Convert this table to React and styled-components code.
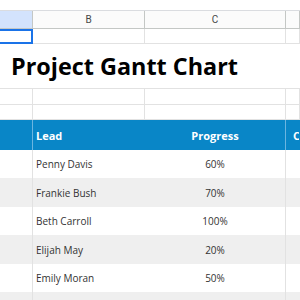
import React from 'react';
import styled, { createGlobalStyle, css } from 'styled-components';

const GlobalStyle = createGlobalStyle`
  html, body {
    margin: 0;
    padding: 0;
    background: #ffffff;
    overflow: hidden;
  }
  * {
    box-sizing: border-box;
  }
`;

const COLS = '33px 112px 141px 1fr';
const GRID = '#e2e2e2';

const rows = [
  { lead: 'Penny Davis', progress: '60%' },
  { lead: 'Frankie Bush', progress: '70%' },
  { lead: 'Beth Carroll', progress: '100%' },
  { lead: 'Elijah May', progress: '20%' },
  { lead: 'Emily Moran', progress: '50%' },
  { lead: '', progress: '' },
];

function App() {
  return (
    <>
      <GlobalStyle />
      <Sheet>
        <TopStrip />
        <ColumnHeader>
          <ColLetter selected />
          <ColLetter>B</ColLetter>
          <ColLetter>C</ColLetter>
          <ColLetter />
        </ColumnHeader>

        <Row height={15}>
          <Cell selected />
          <Cell />
          <Cell />
          <Cell />
        </Row>

        <TitleRow>
          <Title>Project Gantt Chart</Title>
        </TitleRow>

        <Row height={16}>
          <Cell />
          <Cell />
          <Cell />
          <Cell />
        </Row>
        <Row height={15}>
          <Cell />
          <Cell />
          <Cell />
          <Cell />
        </Row>

        <HeadRow>
          <HeadCell divider />
          <HeadCell>Lead</HeadCell>
          <HeadCell center divider>
            Progress
          </HeadCell>
          <HeadCell pad={7}>Cost</HeadCell>
        </HeadRow>

        {rows.map((r, i) => (
          <DataRow key={i} striped={i % 2 === 1} height={i % 2 === 0 ? 28 : 29}>
            <DataCell divider />
            <DataCell>{r.lead}</DataCell>
            <DataCell center divider>
              {r.progress}
            </DataCell>
            <DataCell />
          </DataRow>
        ))}
      </Sheet>
    </>
  );
}

const Sheet = styled.div`
  width: 300px;
  height: 300px;
  overflow: hidden;
  font-family: 'Open Sans', 'Liberation Sans', sans-serif;
`;

const TopStrip = styled.div`
  height: 11px;
  background: #ffffff;
  border-bottom: 1px solid #dadce0;
`;

const ColumnHeader = styled.div`
  display: grid;
  grid-template-columns: ${COLS};
  height: 18px;
  border-bottom: 1px solid #c4c7c5;
`;

const ColLetter = styled.div`
  display: flex;
  align-items: center;
  justify-content: center;
  font-family: Roboto, 'Liberation Sans', sans-serif;
  font-size: 10px;
  color: #444746;
  background: ${(p) => (p.selected ? '#d3e3fd' : '#fbfbfb')};
  border-right: 1px solid #c4c7c5;
`;

const Row = styled.div`
  display: grid;
  grid-template-columns: ${COLS};
  height: ${(p) => p.height}px;
`;

const Cell = styled.div`
  border-right: 1px solid ${GRID};
  border-bottom: 1px solid ${GRID};
  ${(p) =>
    p.selected &&
    css`
      border: none;
      box-shadow: inset 0 2px #1a73e8, inset -2px 0 #1a73e8, inset 0 -2px #1a73e8;
    `}
`;

const TitleRow = styled.div`
  height: 45px;
  display: flex;
  align-items: center;
  padding-left: 11px;
  border-bottom: 1px solid ${GRID};
`;

const Title = styled.h1`
  margin: 0;
  font-family: 'Open Sans', sans-serif;
  font-weight: 700;
  font-size: 23.4px;
  color: #000000;
  white-space: nowrap;
`;

const HeadRow = styled.div`
  display: grid;
  grid-template-columns: ${COLS};
  height: 30px;
  background: #0986c7;
`;

const HeadCell = styled.div`
  display: flex;
  align-items: center;
  justify-content: ${(p) => (p.center ? 'center' : 'flex-start')};
  padding-left: ${(p) => (p.center ? 0 : p.pad || 3)}px;
  font-weight: 700;
  font-size: 11px;
  color: #ffffff;
  white-space: nowrap;
  overflow: hidden;
  border-right: 1px solid ${(p) => (p.divider ? '#6cb5e0' : 'transparent')};
`;

const DataRow = styled.div`
  display: grid;
  grid-template-columns: ${COLS};
  height: ${(p) => p.height}px;
  background: ${(p) => (p.striped ? '#efefef' : '#ffffff')};
`;

const DataCell = styled.div`
  display: flex;
  align-items: center;
  justify-content: ${(p) => (p.center ? 'center' : 'flex-start')};
  padding-left: ${(p) => (p.center ? 0 : 3)}px;
  font-size: 10px;
  color: #333333;
  white-space: nowrap;
  border-right: 1px solid ${(p) => (p.divider ? GRID : 'transparent')};
`;

export default App;
